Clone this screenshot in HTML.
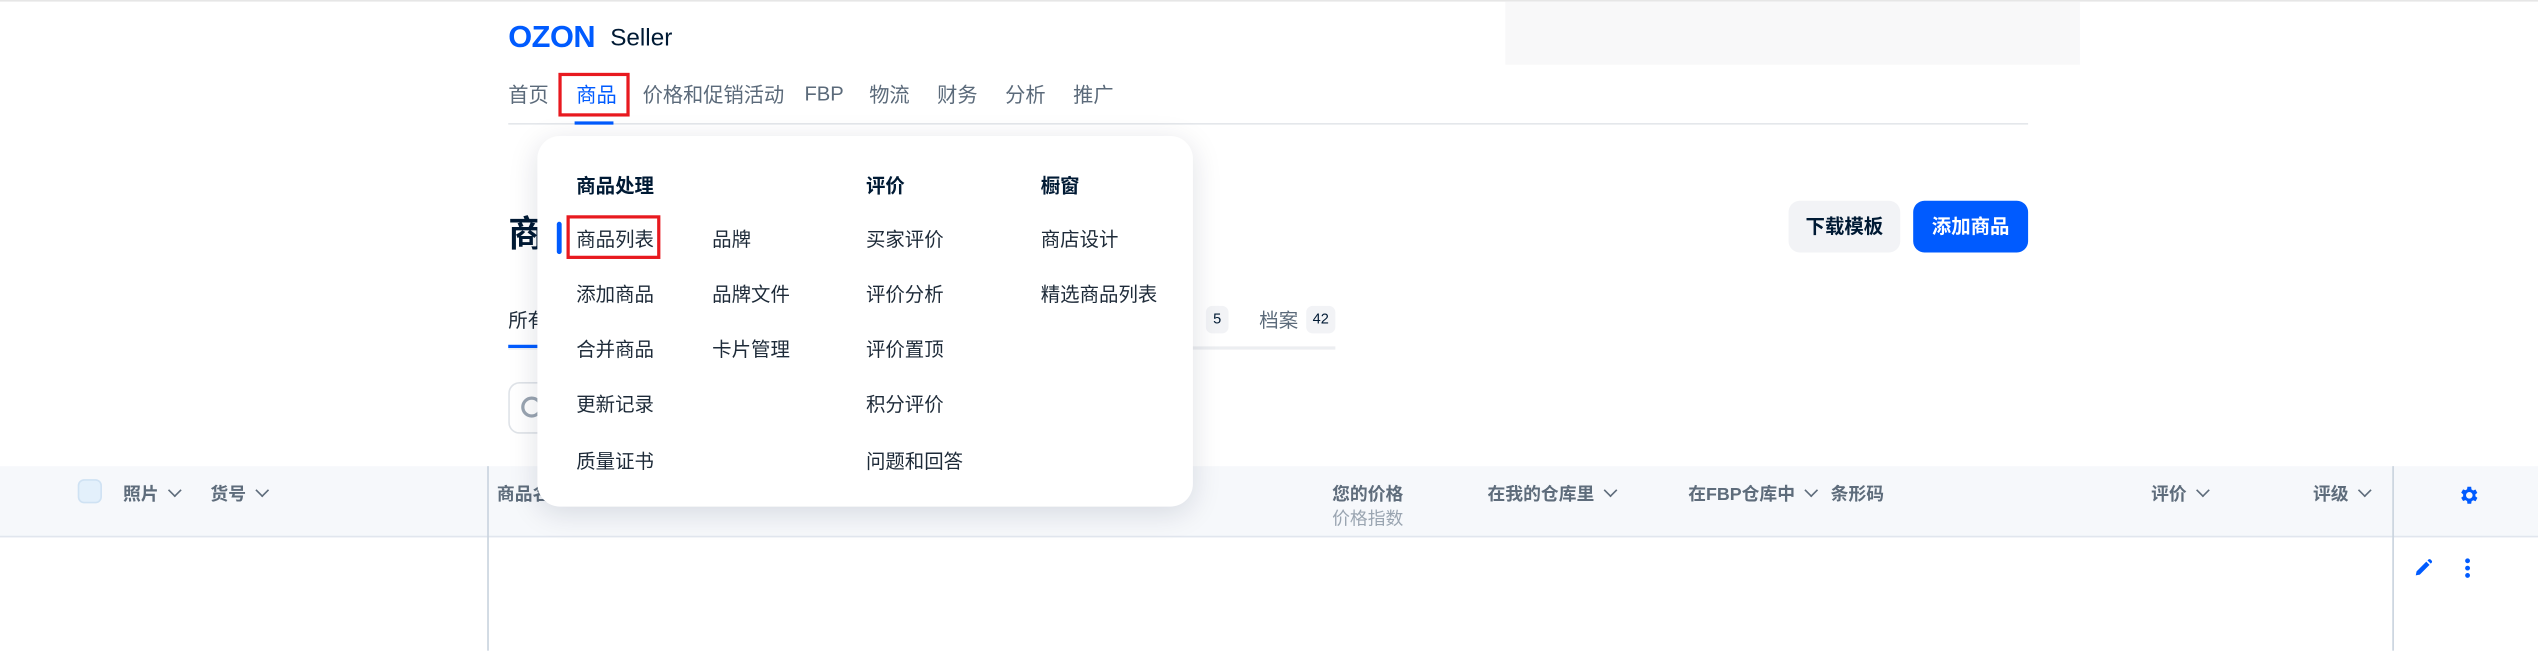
<!DOCTYPE html>
<html><head><meta charset="utf-8"><style>
*{margin:0;padding:0;box-sizing:border-box}
html,body{width:2538px;height:650px;overflow:hidden;background:#fff}
#w{position:absolute;left:0;top:0;width:1568px;height:402px;transform:scale(1.6186);transform-origin:0 0;font-family:"Liberation Sans","Noto Sans CJK SC",sans-serif;color:#001a34}
.a{position:absolute;white-space:nowrap}
.nav{top:50px;font-size:12.5px;color:#5b6a7a;line-height:18px;height:18px}
.mi{font-size:12px;color:#1d2a38}
.mh{font-size:12px;font-weight:bold;color:#001a34}
.th{top:297px;font-size:11px;font-weight:bold;color:#5e6c7b}
.chev{display:inline-block;width:6px;height:6px;border-right:1.6px solid #5e6c7b;border-bottom:1.6px solid #5e6c7b;transform:rotate(45deg);margin-left:7px;position:relative;top:-3px}
</style></head><body><div id="w">
<div class="a" style="left:0;top:0;width:1568px;height:1px;background:#e6e6e6"></div>
<div class="a" style="left:930px;top:1px;width:355px;height:39px;background:#f8f8f9"></div>
<div class="a" style="left:314px;top:13px;font-size:19px;font-weight:bold;color:#005bff;font-family:'Liberation Sans',sans-serif;letter-spacing:-0.3px">OZON</div>
<div class="a" style="left:377px;top:15px;font-size:15px;color:#001a34">Seller</div>

<div class="a nav" style="left:314px">首页</div>
<div class="a nav" style="left:356px;color:#005bff">商品</div>
<div class="a nav" style="left:397px">价格和促销活动</div>
<div class="a nav" style="left:497px;top:49px">FBP</div>
<div class="a nav" style="left:537px">物流</div>
<div class="a nav" style="left:579px">财务</div>
<div class="a nav" style="left:621px">分析</div>
<div class="a nav" style="left:663px">推广</div>
<div class="a" style="left:345px;top:45px;width:44px;height:27px;border:2px solid #e8191f"></div>
<div class="a" style="left:314px;top:76px;width:939px;height:1px;background:#e4e7eb"></div>
<div class="a" style="left:355px;top:75px;width:24px;height:2px;background:#005bff"></div>

<div class="a" style="left:314px;top:127px;font-size:22px;font-weight:bold">商品</div>
<div class="a" style="left:1105px;top:124px;width:69px;height:32px;background:#f2f3f6;border-radius:7px;font-size:12px;font-weight:bold;text-align:center;line-height:32px">下载模板</div>
<div class="a" style="left:1182px;top:124px;width:71px;height:32px;background:#005bff;border-radius:7px;font-size:12px;font-weight:bold;color:#fff;text-align:center;line-height:32px">添加商品</div>

<div class="a" style="left:314px;top:189px;font-size:12px;color:#1d2a38">所有商品</div>
<div class="a" style="left:314px;top:214px;width:511px;height:2px;background:#eceef1"></div>
<div class="a" style="left:314px;top:213px;width:22px;height:2px;background:#005bff"></div>
<div class="a" style="left:745px;top:189px;width:14px;height:17px;background:#f2f3f6;border-radius:4px;font-size:9px;text-align:center;line-height:17px">5</div>
<div class="a" style="left:778px;top:189px;font-size:12px;color:#5b6a7a">档案</div>
<div class="a" style="left:807px;top:189px;width:18px;height:17px;background:#f2f3f6;border-radius:4px;font-size:9px;text-align:center;line-height:17px">42</div>
<div class="a" style="left:314px;top:236px;width:300px;height:32px;border:1px solid #dfe3e8;border-radius:7px"></div>
<div class="a" style="left:322px;top:245px;width:13px;height:13px;border:2.5px solid #9aa5b1;border-radius:50%"></div>

<div class="a" style="left:0;top:288px;width:1568px;height:44px;background:#f6f8fb;border-bottom:1px solid #e1e6ee"></div>
<div class="a" style="left:48px;top:296px;width:15px;height:15px;background:#e3f0fb;border:1px solid #cfe2f3;border-radius:4px"></div>
<div class="a th" style="left:76px">照片<span class="chev"></span></div>
<div class="a th" style="left:130px">货号<span class="chev"></span></div>
<div class="a" style="left:301px;top:288px;width:1px;height:114px;background:#c9d3de"></div>
<div class="a th" style="left:307px">商品名称</div>
<div class="a th" style="left:823px">您的价格</div>
<div class="a" style="left:823px;top:312px;font-size:11px;color:#9aa5b1">价格指数</div>
<div class="a th" style="left:919px">在我的仓库里<span class="chev"></span></div>
<div class="a th" style="left:1043px">在FBP仓库中<span class="chev"></span></div>
<div class="a th" style="left:1131px">条形码</div>
<div class="a th" style="left:1329px">评价<span class="chev"></span></div>
<div class="a th" style="left:1429px">评级<span class="chev"></span></div>
<div class="a" style="left:1478px;top:288px;width:1px;height:114px;background:#c9d3de"></div>
<svg class="a" style="left:1518px;top:299px" width="14" height="14" viewBox="0 0 24 24"><path fill="#005bff" d="M19.4 13a7.5 7.5 0 000-2l2.1-1.6-2-3.5-2.5 1a7.6 7.6 0 00-1.7-1L15 3h-4l-.4 2.7a7.6 7.6 0 00-1.7 1l-2.5-1-2 3.5L6.5 11a7.5 7.5 0 000 2l-2.1 1.6 2 3.5 2.5-1a7.6 7.6 0 001.7 1L11 21h4l.4-2.7a7.6 7.6 0 001.7-1l2.5 1 2-3.5zM13 15.5a3.5 3.5 0 110-7 3.5 3.5 0 010 7z"/></svg>
<svg class="a" style="left:1491px;top:345px" width="12" height="12" viewBox="0 0 24 24"><path fill="#005bff" d="M3 21l1-5L16 4l4 4L8 20zM17.5 2.5l4 4 1-1a2 2 0 000-3l-1-1a2 2 0 00-3 0z"/></svg>
<div class="a" style="left:1523px;top:345px;width:3px;height:3px;border-radius:50%;background:#005bff;box-shadow:0 4.5px 0 #005bff,0 9px 0 #005bff"></div>

<div class="a" style="left:332px;top:84px;width:405px;height:229px;background:#fff;border-radius:14px;box-shadow:0 4px 18px rgba(0,26,52,.13)"></div>
<div class="a mh" style="left:356px;top:106px">商品处理</div>
<div class="a mh" style="left:535px;top:106px">评价</div>
<div class="a mh" style="left:643px;top:106px">橱窗</div>
<div class="a" style="left:344px;top:137px;width:3px;height:20px;background:#005bff;border-radius:2px"></div>
<div class="a" style="left:350px;top:133px;width:58px;height:27px;border:2px solid #e8191f"></div>
<div class="a mi" style="left:356px;top:139px">商品列表</div>
<div class="a mi" style="left:356px;top:173px">添加商品</div>
<div class="a mi" style="left:356px;top:207px">合并商品</div>
<div class="a mi" style="left:356px;top:241px">更新记录</div>
<div class="a mi" style="left:356px;top:276px">质量证书</div>
<div class="a mi" style="left:440px;top:139px">品牌</div>
<div class="a mi" style="left:440px;top:173px">品牌文件</div>
<div class="a mi" style="left:440px;top:207px">卡片管理</div>
<div class="a mi" style="left:535px;top:139px">买家评价</div>
<div class="a mi" style="left:535px;top:173px">评价分析</div>
<div class="a mi" style="left:535px;top:207px">评价置顶</div>
<div class="a mi" style="left:535px;top:241px">积分评价</div>
<div class="a mi" style="left:535px;top:276px">问题和回答</div>
<div class="a mi" style="left:643px;top:139px">商店设计</div>
<div class="a mi" style="left:643px;top:173px">精选商品列表</div>
</div></body></html>
